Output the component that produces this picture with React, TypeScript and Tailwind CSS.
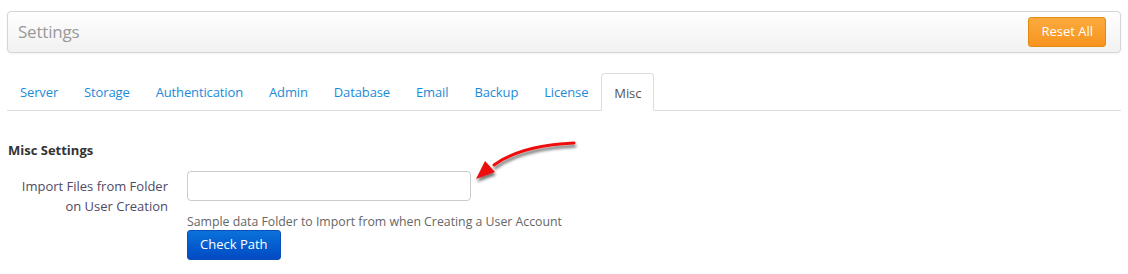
import React from "react";

const tabs = [
  "Server",
  "Storage",
  "Authentication",
  "Admin",
  "Database",
  "Email",
  "Backup",
  "License",
  "Misc",
];

function RedArrow() {
  return (
    <svg
      className="pointer-events-none absolute left-[468px] top-[136px]"
      width="116"
      height="52"
      viewBox="0 0 116 52"
    >
      <defs>
        <filter id="arrowShadow" x="-20%" y="-40%" width="140%" height="180%">
          <feGaussianBlur in="SourceAlpha" stdDeviation="1.6" />
          <feOffset dx="1" dy="3" result="blur" />
          <feComponentTransfer>
            <feFuncA type="linear" slope="0.55" />
          </feComponentTransfer>
          <feMerge>
            <feMergeNode />
            <feMergeNode in="SourceGraphic" />
          </feMerge>
        </filter>
      </defs>
      <g filter="url(#arrowShadow)">
        <path
          d="M106 7 C 80 8, 50 12, 26 29"
          fill="none"
          stroke="#ee1111"
          strokeWidth="3"
          strokeLinecap="round"
        />
        <path d="M8 43 L17 25 L27 36 Z" fill="#ee1111" />
      </g>
    </svg>
  );
}

export default function App() {
  return (
    <div className="relative h-[274px] w-[1128px] overflow-hidden bg-white font-['Open_Sans',sans-serif] text-[13px] text-[#333]">
      <div className="px-[7px] pt-[11px]">
        <div className="flex h-[42px] items-center justify-between rounded-[4px] border border-[#d5d5d5] bg-gradient-to-b from-white to-[#f1f1f1] pl-[10px] pr-[14px] shadow-[0_1px_2px_rgba(0,0,0,0.05)]">
          <span className="text-[17px] tracking-[-0.2px] text-[#999]">Settings</span>
          <button className="h-[30px] rounded-[3px] border border-[#e08a12] bg-gradient-to-b from-[#fbaa3d] to-[#f7941d] px-[12px] text-[13px] text-white">
            Reset All
          </button>
        </div>

        <ul className="mt-[20px] flex border-b border-[#ddd]">
          {tabs.map((t) => {
            const active = t === "Misc";
            return (
              <li
                key={t}
                className={
                  active
                    ? "-mb-px h-[38px] rounded-t-[4px] border border-[#ddd] border-b-white bg-white px-[12px] pt-[10px] tracking-[-0.13px] text-[#555]"
                    : "h-[37px] px-[13px] pt-[10px] tracking-[-0.13px] text-[#1b8bd8]"
                }
              >
                {t}
              </li>
            );
          })}
        </ul>
      </div>

      <div className="px-[8px] pt-[30px]">
        <h4 className="text-[13px] font-bold text-[#333]">Misc Settings</h4>
        <div className="mt-[10px] flex">
          <label className="w-[160px] pt-[5px] text-right text-[13px] leading-[20px] text-[#4f4a66]">
            Import Files from Folder
            <br />
            on User Creation
          </label>
          <div className="ml-[19px] flex flex-col items-start">
            <input
              type="text"
              className="h-[30px] w-[284px] rounded-[4px] border border-[#ccc] bg-white px-2 outline-none"
            />
            <p className="mt-[13px] text-[12.3px] leading-[16px] text-[#666]">
              Sample data Folder to Import from when Creating a User Account
            </p>
            <button className="h-[30px] rounded-[3px] border border-[#0a4fb3] bg-gradient-to-b from-[#0c72da] to-[#0449c4] px-[12px] text-[13px] text-white">
              Check Path
            </button>
          </div>
        </div>
      </div>

      <RedArrow />
    </div>
  );
}
